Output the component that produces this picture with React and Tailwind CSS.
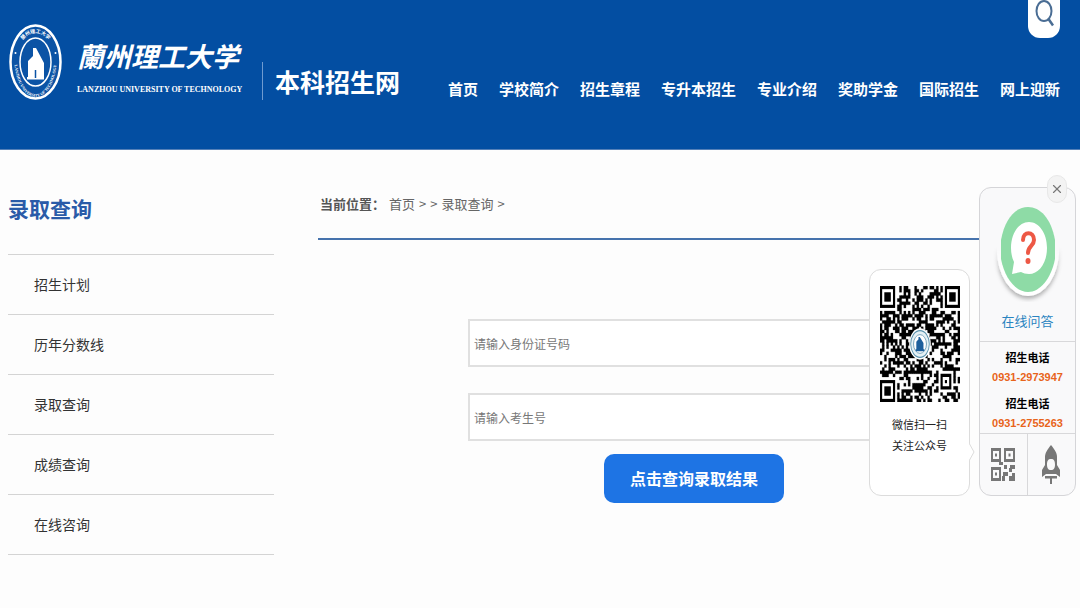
import { X } from "lucide-react";

const navItems = [
    "首页",
    "学校简介",
    "招生章程",
    "专升本招生",
    "专业介绍",
    "奖助学金",
    "国际招生",
    "网上迎新",
];

const sideItems = ["招生计划", "历年分数线", "录取查询", "成绩查询", "在线咨询"];

const phones = ["0931-2973947", "0931-2755263"];

const QR_SIZE = 37;

const isFinderArea = (x, y) =>
    (x < 8 && y < 8) ||
    (x >= QR_SIZE - 8 && y < 8) ||
    (x < 8 && y >= QR_SIZE - 8);

// dark modules outside the three finder squares
const buildQrPath = () => {
    let seed = 20931;
    let path = "";
    for (let y = 0; y < QR_SIZE; y++) {
        for (let x = 0; x < QR_SIZE; x++) {
            seed = (seed * 1103515 + 12345) % 2147483648;
            const nearAlign = Math.abs(x - 30) <= 3 && Math.abs(y - 30) <= 3;
            if (isFinderArea(x, y) || nearAlign) continue;
            if ((seed >> 12) % 100 < 54) path += `M${x} ${y}h1v1h-1z`;
        }
    }
    return path;
};

const qrPath = buildQrPath();

const Crest = () => (
    <svg viewBox="0 0 53 76" className="w-[53px] h-[76px] shrink-0" aria-label="校徽">
        <defs>
            <path id="crest-top" d="M7 38a19.5 29 0 0 1 39 0" />
            <path id="crest-bottom" d="M5 30C5 87 48 87 48 30" />
        </defs>
        <ellipse cx="26.5" cy="38" rx="25" ry="36.5" fill="#0b53a5" stroke="#fff" strokeWidth="2.5" />
        <ellipse cx="26.5" cy="38" rx="15.5" ry="24" fill="none" stroke="#fff" strokeWidth="1.5" />
        <path d="M19 37l5-5V53h-5zM24 24l3 0 8 15v15H24z" fill="#fff" />
        <path d="M18 53h17v2.500H18z" fill="#fff" />
        <path d="M26.500 46v8" stroke="#0b53a5" strokeWidth="1.500" />
        <circle cx="6.5" cy="29" r="1" fill="#fff" />
        <circle cx="46.5" cy="29" r="1" fill="#fff" />
        <text
            fill="#fff"
            fontSize="5"
            fontWeight="bold"
            fontFamily="Noto Sans CJK TC, sans-serif"
            textAnchor="middle"
        >
            <textPath href="#crest-top" startOffset="50%">蘭州理工大学</textPath>
        </text>
        <text
            fill="#fff"
            fontSize="4"
            fontWeight="bold"
            fontFamily="Liberation Serif, serif"
            textAnchor="middle"
        >
            <textPath href="#crest-bottom" startOffset="50%">LANZHOU UNIVERSITY OF TECHNOLOGY</textPath>
        </text>
    </svg>
);

const Finder = ({ x, y }) => (
    <g>
        <rect x={x} y={y} width="7" height="7" fill="#000" />
        <rect x={x + 1} y={y + 1} width="5" height="5" fill="#fff" />
        <rect x={x + 2} y={y + 2} width="3" height="3" fill="#000" />
    </g>
);

const QrCode = () => (
    <svg
        viewBox="0 0 37 37"
        preserveAspectRatio="none"
        className="w-20 h-[116px]"
        aria-label="微信公众号二维码"
    >
        <path d={qrPath} fill="#000" stroke="#000" strokeWidth="0.1" />
        <Finder x={0} y={0} />
        <Finder x={30} y={0} />
        <Finder x={0} y={30} />
        <path d="M28 28h5v5h-5zM29 29v3h3v-3z" fill="#000" fillRule="evenodd" />
        <path d="M30 30h1v1h-1z" fill="#000" />
        <circle cx="18.5" cy="18.5" r="5" fill="#fff" />
        <circle cx="18.5" cy="18.5" r="4.3" fill="#e6f1f5" stroke="#5b93ae" strokeWidth="0.4" />
        <circle cx="18.5" cy="18.5" r="3" fill="#fff" stroke="#5b93ae" strokeWidth="0.3" />
        <path
            d="M16.8 17.8l1-.8v3.200h-1zM17.8 16.300h.6l1.700 1.900v2h-2.300zM16.500 20.200h4v.600h-4z"
            fill="#1d5f9c"
        />
    </svg>
);

const SearchIcon = () => (
    <svg viewBox="0 0 20 28" className="w-5 h-7" fill="none" stroke="#4a6d94">
        <ellipse cx="10" cy="11" rx="7.5" ry="10" strokeWidth="2" />
        <path d="M14.500 19l4.500 6.500" strokeWidth="2.5" />
    </svg>
);

const QuestionBadge = () => (
    <svg viewBox="0 0 70 100" className="w-[70px] h-[100px]" aria-hidden="true">
        <defs>
            <filter id="badge-shadow" x="-20%" y="-20%" width="140%" height="140%">
                <feDropShadow dx="0" dy="3" stdDeviation="2" floodOpacity="0.3" />
            </filter>
            <linearGradient id="badge-fade" x1="0" y1="0" x2="0" y2="1">
                <stop offset="0.45" stopColor="#000" />
                <stop offset="0.7" stopColor="#fff" />
            </linearGradient>
            <mask id="badge-lower">
                <path d="M0 0h70v100H0z" fill="url(#badge-fade)" />
            </mask>
        </defs>
        <g mask="url(#badge-lower)">
            <ellipse cx="35" cy="48" rx="31" ry="46" fill="#fff" filter="url(#badge-shadow)" />
        </g>
        <path
            d="M8 38C12 16 23 5 35 5s23 11 27 33v19C58 77 47 90 35 90S12 77 8 57z"
            fill="#8edba6"
        />
        <path
            d="M36 20c10 0 18 11 18 26S46 72 36 72c-3 0-6-1-8-2l-9 2 2-12c-2-4-3-9-3-14 0-15 8-26 18-26z"
            fill="#fff"
        />
        <path
            d="M30 38c0-9 11-9 11 0 0 6-6 6-6 13"
            fill="none"
            stroke="#ed5845"
            strokeWidth="4"
            strokeLinecap="round"
        />
        <ellipse cx="35" cy="59" rx="2.5" ry="3" fill="#ed5845" />
    </svg>
);

const SmallQrIcon = () => (
    <svg viewBox="0 0 24 36" className="w-6 h-9" fill="#777">
        <path
            d="M0 1h10v14H0zM2 4v8h6V4zM13 1h11v14H13zM15 4v8h7V4zM0 20h10v14H0zM2 23v8h6v-8z"
            fillRule="evenodd"
        />
        <path d="M4 6.500h2v3H4zM17.500 6.500h2v3h-2zM4 25.500h2v3H4zM13 18h3v4h-3zM8 15h4v3H8zM19 18h5v4h-3v3h-3v-4h1zM12 25h5v4h-3v5h-3v-5h1zM18 29h3v-3h3v8h-6z" />
    </svg>
);

const RocketIcon = () => (
    <svg viewBox="0 0 20 42" className="w-5 h-[42px]" fill="#777">
        <path
            d="M10 1c4 5 6 8 6 12v8l3 5v7l-4-3H5l-4 3v-7l3-5v-8c0-4 2-7 6-12zM10 15c-3 0-4 2-4 5.500s1 5.500 4 5.500 4-2 4-5.500-1-5.500-4-5.500z"
            fillRule="evenodd"
        />
        <path d="M4 32h12v2.500h-5V40H9v-5.500H4z" />
    </svg>
);

const Header = () => (
    <header className="relative flex items-start bg-[#034ea2] border-b border-[#5580b8] pt-6 pb-12 pl-[9px] pr-5 text-white">
        <a href="#home" className="flex items-start shrink-0">
            <Crest />
            <span className="block w-[164px] ml-[15px] mt-[14px] whitespace-nowrap">
                <span className="block text-[27px] leading-9 font-bold italic">蘭州理工大学</span>
                <span className="block mt-2 text-[8px] leading-4 font-bold font-['Liberation_Serif',serif]">
                    LANZHOU UNIVERSITY OF TECHNOLOGY
                </span>
            </span>
            <span className="block ml-[21px] mt-[38px] pl-3 border-l border-[#6f9bd0] text-[25px] leading-[38px] font-bold">
                本科招生网
            </span>
        </a>
        <nav className="flex flex-1 justify-end gap-[21px] mt-[53px] whitespace-nowrap">
            {navItems.map((item) => (
                <a key={item} href="#nav" className="text-[15px] leading-6 font-bold">
                    {item}
                </a>
            ))}
        </nav>
        <button
            type="button"
            aria-label="搜索"
            className="absolute top-0 right-5 flex justify-center w-8 h-[38px] rounded-b-xl bg-white"
        >
            <SearchIcon />
        </button>
    </header>
);

const Sidebar = () => (
    <aside className="w-[266px] shrink-0 pt-[42px]">
        <h2 className="text-[21px] leading-8 font-bold text-[#2a5ba8]">录取查询</h2>
        <ul className="mt-[30px] border-t border-[#d4d4d4]">
            {sideItems.map((item) => (
                <li key={item} className="border-b border-[#d4d4d4]">
                    <a href="#side" className="block pl-[26px] text-[14px] leading-[59px] text-[#333]">
                        {item}
                    </a>
                </li>
            ))}
        </ul>
    </aside>
);

const QueryForm = () => (
    <form className="flex flex-col items-center w-[452px] ml-[150px] mt-[79px]">
        <input
            type="text"
            aria-label="身份证号码"
            placeholder="请输入身份证号码"
            className="w-full h-12 px-1 border-2 border-[#e0e0e0] bg-white text-[12px] placeholder:text-[#777]"
        />
        <input
            type="text"
            aria-label="考生号"
            placeholder="请输入考生号"
            className="w-full h-12 px-1 mt-[26px] border-2 border-[#e0e0e0] bg-white text-[12px] placeholder:text-[#777]"
        />
        <button
            type="button"
            className="mt-[13px] px-[26px] rounded-[10px] bg-[#1e74e4] text-[16px] leading-[49px] font-bold text-white"
        >
            点击查询录取结果
        </button>
    </form>
);

const FloatingPanel = () => (
    <div className="absolute top-[187px] right-1 flex items-end gap-[9px]">
        <div className="relative w-[101px] h-[227px] pt-4 rounded-xl border border-[#dcdcdc] bg-white text-center">
            <div className="flex justify-center">
                <QrCode />
            </div>
            <p className="mt-3 text-[11px] leading-[21px] text-[#222]">
                微信扫一扫
                <br />
                关注公众号
            </p>
            <svg viewBox="0 0 6 18" className="absolute -right-[6px] bottom-[34px] w-[6px] h-[18px]">
                <path d="M0 0l5 9-5 9z" fill="#fff" />
                <path d="M0 0l5 9-5 9" fill="none" stroke="#dcdcdc" />
            </svg>
        </div>

        <div className="relative w-[97px] rounded-xl border border-[#d5d5d8] bg-[#f9f9fa] text-center">
            <button
                type="button"
                aria-label="关闭"
                className="absolute -top-[13px] right-2 flex items-center justify-center w-5 h-7 rounded-full border border-[#e8e8e8] bg-[#f3f3f3] text-[#777]"
            >
                <X size={14} />
            </button>
            <a href="#ask" className="flex flex-col items-center pt-[14px] pb-[10px] text-[13px] leading-5 text-[#2a84c0]">
                <QuestionBadge />
                <span className="mt-[9px]">在线问答</span>
            </a>
            <dl className="border-t border-[#d8d8da] pt-[5px] text-[11px] font-bold">
                {phones.map((phone) => (
                    <div key={phone} className="pb-[6px] last:pb-0">
                        <dt className="leading-5 text-black">招生电话</dt>
                        <dd className="leading-5 text-[#e8641b] font-['Liberation_Sans',sans-serif]">{phone}</dd>
                    </div>
                ))}
            </dl>
            <div className="grid grid-cols-2 h-[62px] border-t border-[#d8d8da]">
                <button type="button" aria-label="二维码" className="flex items-center justify-center border-r border-[#d8d8da]">
                    <SmallQrIcon />
                </button>
                <button type="button" aria-label="返回顶部" className="flex items-center justify-center">
                    <RocketIcon />
                </button>
            </div>
        </div>
    </div>
);

const App = () => {
    return (
        <div className="relative min-h-screen bg-[#fdfdfd] font-['Noto_Sans_CJK_SC',sans-serif]">
            <Header />
            <div className="flex gap-11 pl-2 pr-[10px]">
                <Sidebar />
                <main className="flex-1 min-w-0 pt-[42px]">
                    <div className="flex gap-1 pb-[22px] pl-[2px] border-b-2 border-[#4673ad] text-[13px] leading-6 text-[#666]">
                        <strong className="text-[#555]">当前位置：</strong>
                        <a href="#home">首页</a>
                        <span>&gt;</span>
                        <span>&gt;</span>
                        <a href="#query">录取查询</a>
                        <span>&gt;</span>
                    </div>
                    <QueryForm />
                </main>
            </div>
            <FloatingPanel />
        </div>
    );
};

export default App;
